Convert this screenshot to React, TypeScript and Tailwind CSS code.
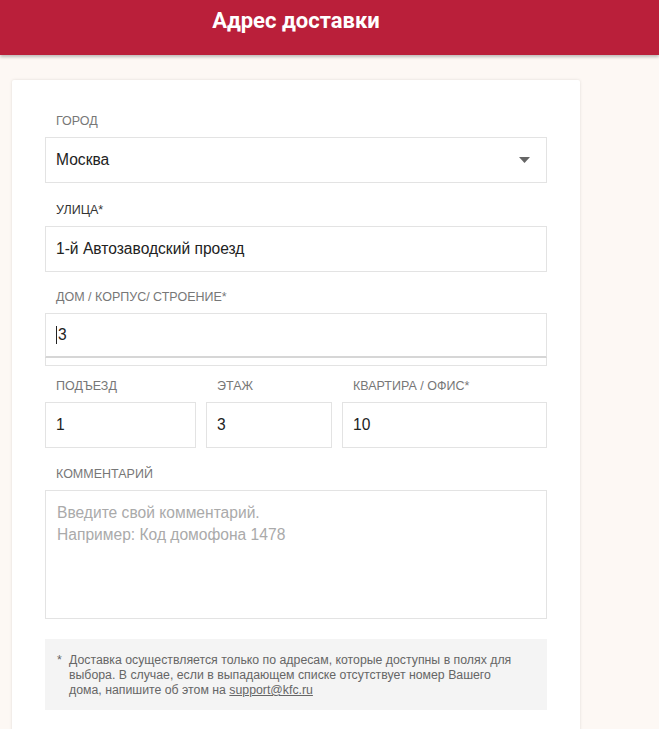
import React from 'react';

const Label: React.FC<{ children: React.ReactNode; dark?: boolean }> = ({ children, dark }) => (
    <div className={`pl-[11px] mb-2 text-[12.5px] leading-4 uppercase ${dark ? 'text-[#333]' : 'text-[#777]'}`}>
        {children}
    </div>
);

const Field: React.FC<{ value: string; className?: string }> = ({ value, className = '' }) => (
    <div className={`h-[46px] border border-[#e3e3e3] bg-white flex items-center pl-[10px] text-[15.6px] text-[#222] ${className}`}>
        {value}
    </div>
);

export default function App() {
    return (
        <div className="min-h-screen h-[729px] overflow-hidden bg-[#fdf8f4] [font-family:'Liberation_Sans',Arial,sans-serif]">
            <header className="h-[55px] bg-[#ba1f3a] shadow-[0_2px_3px_rgba(0,0,0,0.25)] relative z-10">
                <div className="w-[592px] h-full flex justify-center pt-[6px]">
                    <h1 className="[font-family:Roboto,sans-serif] font-bold text-[22px] leading-[30px] text-white">Адрес доставки</h1>
                </div>
            </header>

            <div className="pt-[25px] pl-3 w-[580px]">
                <div className="bg-white rounded-t-[2px] shadow-[0_0_3px_rgba(0,0,0,0.12)] px-[33px] pt-[33px] pb-10">
                    <Label>Город</Label>
                    <div className="h-[46px] border border-[#e3e3e3] flex items-center justify-between pl-[10px] pr-[16px] text-[15.6px] text-[#222]">
                        <span>Москва</span>
                        <svg width="11" height="6" viewBox="0 0 11 6">
                            <path d="M0 0h11L5.5 6z" fill="#666" />
                        </svg>
                    </div>

                    <div className="mt-[19px]">
                        <Label dark>Улица*</Label>
                        <Field value="1-й Автозаводский проезд" />
                    </div>

                    <div className="mt-[17px]">
                        <Label>Дом / корпус/ строение*</Label>
                        <div className="h-[45px] border border-[#e3e3e3] border-b-[#d6d6d6] border-b-2 flex items-center pl-[10px] text-[15.6px] text-[#222]">
                            <span className="w-px h-[18px] bg-[#222] mr-px" />
                            3
                        </div>
                        <div className="h-[8px] border border-t-0 border-[#e3e3e3]" />
                    </div>

                    <div className="mt-[12px] grid grid-cols-[151px_126px_1fr] gap-x-[10px]">
                        <div>
                            <Label>Подъезд</Label>
                            <Field value="1" />
                        </div>
                        <div>
                            <Label>Этаж</Label>
                            <Field value="3" />
                        </div>
                        <div>
                            <Label>Квартира / офис*</Label>
                            <Field value="10" />
                        </div>
                    </div>

                    <div className="mt-[18px]">
                        <Label>Комментарий</Label>
                        <div className="h-[129px] border border-[#e3e3e3] px-[11px] pt-[11px] text-[15.6px] leading-[22px] text-[#aaa]">
                            Введите свой комментарий.
                            <br />
                            Например: Код домофона 1478
                        </div>
                    </div>

                    <div className="mt-[20px] h-[71px] bg-[#f4f4f4] flex pl-[12px] pr-[20px] pt-[14px] text-[12.3px] leading-[15px] text-[#666]">
                        <span className="w-3 shrink-0">*</span>
                        <p>
                            Доставка осуществляется только по адресам, которые доступны в полях для выбора. В случае, если в выпадающем списке отсутствует номер Вашего дома, напишите об этом на{' '}
                            <a href="#" className="underline">support@kfc.ru</a>
                        </p>
                    </div>
                </div>
            </div>
        </div>
    );
}
